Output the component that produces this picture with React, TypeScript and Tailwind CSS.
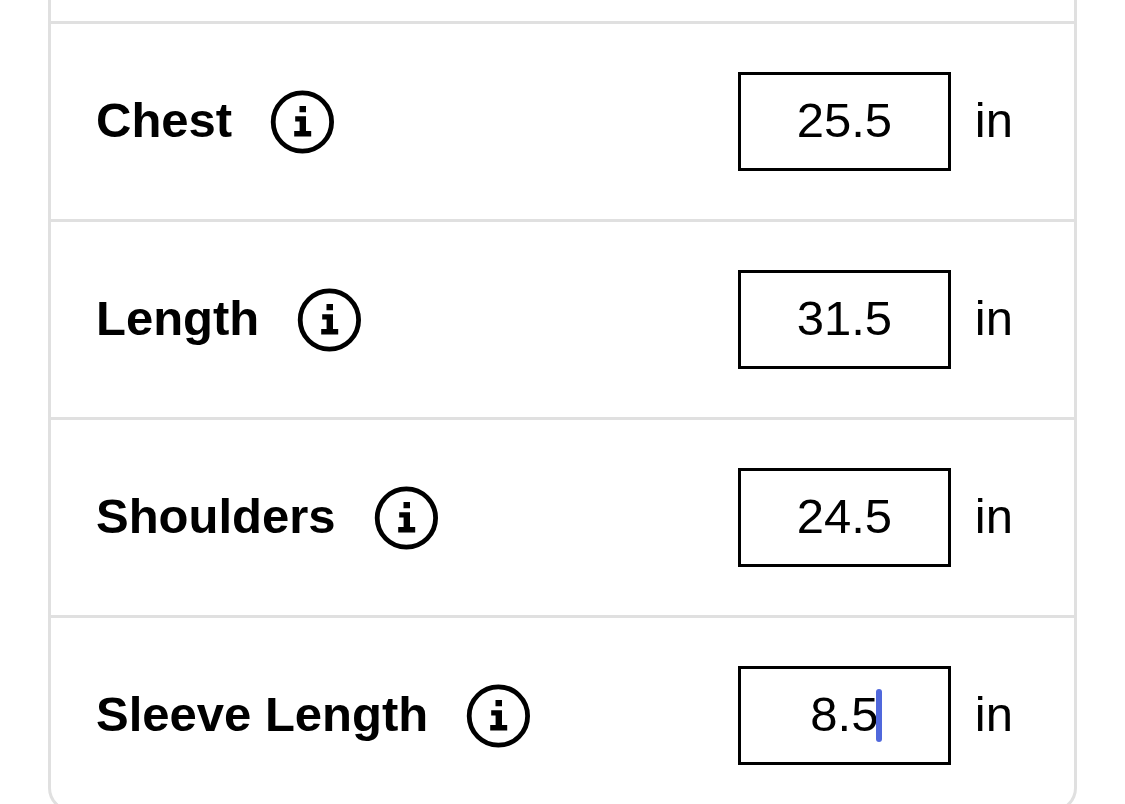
import { useState } from 'react';

type Measurement = {
  id: string;
  label: string;
  value: string;
  active?: boolean;
};

const MEASUREMENTS: Measurement[] = [
  { id: 'chest', label: 'Chest', value: '25.5' },
  { id: 'length', label: 'Length', value: '31.5' },
  { id: 'shoulders', label: 'Shoulders', value: '24.5' },
  { id: 'sleeve-length', label: 'Sleeve Length', value: '8.5', active: true },
];

function InfoIcon() {
  return (
    <svg viewBox="0 0 64 64" className="block size-16" fill="none" aria-hidden="true">
      <circle cx="32.4" cy="32" r="29.2" stroke="currentColor" strokeWidth="4.8" />
      <path fill="currentColor" d="M29.5 16h6.5v6.3h-6.5zM25.2 26.2h10.8v14.8h5.2v5.6H24.2v-5.6h5.4v-9.4h-4.4z" />
    </svg>
  );
}

function MeasurementRow({ id, label, value, active }: Measurement) {
  const [current, setCurrent] = useState(value);

  return (
    <div className="flex items-center justify-between border-t-3 border-[#e0e0e0] py-12 pl-[45px] pr-[61px] last:pb-11">
      <div className="flex items-center gap-[38px]">
        <label htmlFor={id} className="pb-[3px] font-bold">
          {label}
        </label>
        <button type="button" aria-label={`About ${label}`} className="shrink-0 rounded-full">
          <InfoIcon />
        </button>
      </div>
      <div className="flex items-center gap-6">
        <div className="relative">
          <input
            id={id}
            type="text"
            inputMode="decimal"
            value={current}
            onChange={(e) => setCurrent(e.target.value)}
            className="block h-[99px] w-[213px] border-3 border-black bg-white pb-[3px] text-center outline-none"
          />
          {active && (
            <span className="pointer-events-none absolute left-[138px] top-[23px] h-[53px] w-[6px] rounded-full bg-[#5068dc]" />
          )}
        </div>
        <span className="pb-[3px]">in</span>
      </div>
    </div>
  );
}

export default function App() {
  return (
    <main className="h-screen overflow-hidden bg-white px-12 font-['Liberation_Sans',Arial,sans-serif] text-[49px] leading-[56px] text-black">
      <form className="rounded-b-3xl border-x-3 border-b-3 border-[#e0e0e0] pt-[21px]">
        {MEASUREMENTS.map((m) => (
          <MeasurementRow key={m.id} {...m} />
        ))}
      </form>
    </main>
  );
}
